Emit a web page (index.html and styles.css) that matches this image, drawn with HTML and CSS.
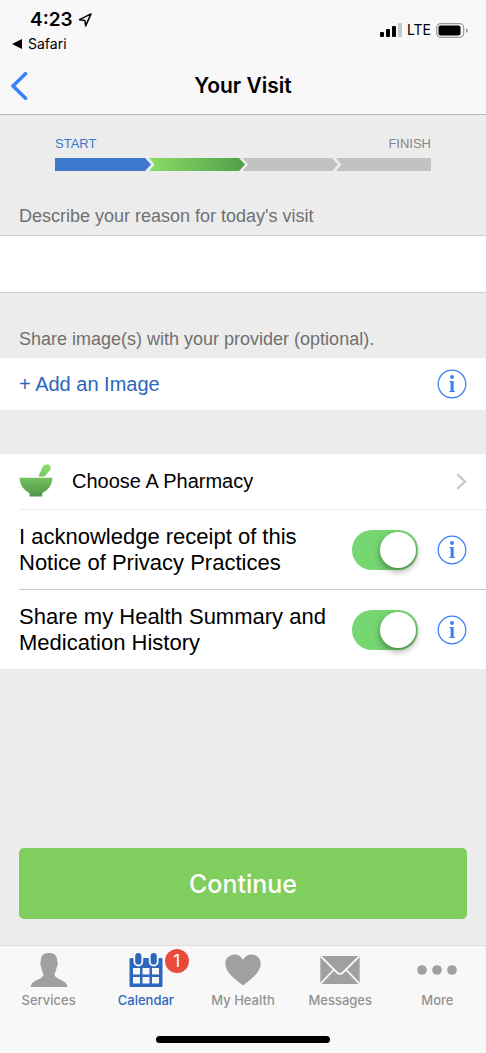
FILE: index.html
```html
<!DOCTYPE html>
<html lang="en">
<head>
<meta charset="utf-8">
<meta name="viewport" content="width=device-width, initial-scale=1">
<title>Your Visit</title>
<link rel="stylesheet" href="styles.css">
</head>
<body>
<div class="app">
  <header class="top">
    <div class="status">
      <div class="status-left">
        <div class="clock">4:23
          <svg width="14" height="14" viewBox="0 0 14 14" aria-hidden="true"><path d="M13 .9 1.500 6.700 6.900 7.400 7.700 12.900z" fill="none" stroke="#000" stroke-width="1.500" stroke-linejoin="round"/></svg>
        </div>
        <a class="return" href="#"><svg width="10" height="10" viewBox="0 0 10 10" aria-hidden="true"><path d="M0 5 10 0V10z"/></svg>Safari</a>
      </div>
      <div class="status-right">
        <svg width="22" height="14" viewBox="0 0 22 14" aria-hidden="true"><rect x="0" y="9" width="4" height="5" rx="1"/><rect x="6" y="6" width="4" height="8" rx="1"/><rect x="12" y="3" width="4" height="11" rx="1"/><rect x="18" y="0" width="4" height="14" rx="1" fill="#c6c6c6"/></svg>
        <span>LTE</span>
        <svg width="32" height="15" viewBox="0 0 32 15" aria-hidden="true"><rect x=".7" y=".7" width="27" height="13.6" rx="4" fill="none" stroke="#999" stroke-width="1.2"/><rect x="2.5" y="2.5" width="22" height="10" rx="2"/><path d="M30 5.2q1.700.6 1.700 2.300T30 9.800z" fill="#999"/></svg>
      </div>
    </div>
    <nav class="titlebar">
      <button class="back" type="button" aria-label="Back"><svg width="17" height="28" viewBox="0 0 17 28" aria-hidden="true"><path d="M14.5 1.8 2 14 14.5 26.2" fill="none" stroke="#3a82f7" stroke-width="3.6" stroke-linecap="round" stroke-linejoin="round"/></svg></button>
      <h1>Your Visit</h1>
    </nav>
  </header>

  <main>
    <section class="progress">
      <div class="progress-labels"><span class="start">START</span><span>FINISH</span></div>
      <svg class="progress-bar" viewBox="0 0 376 13" aria-hidden="true">
        <defs><linearGradient id="step"><stop offset="0" stop-color="#8cdc68"/><stop offset="1" stop-color="#4f9e48"/></linearGradient></defs>
        <path d="M0 0H90L96 6.500 90 13H0z" fill="#3c78cc"/>
        <path d="M94 0H184L190 6.500 184 13H94L99.500 6.500z" fill="url(#step)"/>
        <path d="M187.500 0H277L283 6.500 277 13H187.500L193 6.500z" fill="#c2c2c2"/>
        <path d="M281 0H376V13H281L286.500 6.500z" fill="#c2c2c2"/>
      </svg>
    </section>

    <label class="caption" for="reason">Describe your reason for today's visit</label>
    <input class="reason" id="reason" type="text">

    <p class="caption share">Share image(s) with your provider (optional).</p>
    <div class="row add">
      <button class="link" type="button">+ Add an Image</button>
      <button class="info" type="button" aria-label="About images"><svg viewBox="0 0 30 30" aria-hidden="true"><use href="#info"/></svg></button>
    </div>

    <div class="list">
      <button class="row pharmacy" type="button">
        <svg width="34" height="36" viewBox="0 0 34 36" aria-hidden="true">
          <defs><linearGradient id="mortar" x1="0" y1="0" x2="0" y2="33" gradientUnits="userSpaceOnUse"><stop offset="0" stop-color="#93e072"/><stop offset="1" stop-color="#4d9746"/></linearGradient></defs>
          <path d="M19.500 12.500 23.500 3Q25 .3 28 .3C31.500.3 32.500 4 30.800 6.300L25.500 12.500zM.5 13.800H33.500Q33 24.500 23.200 29.200V32.500H10.500V29.200Q1 24.500.5 13.800z" fill="url(#mortar)"/>
        </svg>
        <span>Choose A Pharmacy</span>
        <svg class="chevron" width="11" height="17" viewBox="0 0 11 17" aria-hidden="true"><path d="M1.200 1.200 9 8.500 1.200 15.800" fill="none" stroke="#c7c7cc" stroke-width="2.300"/></svg>
      </button>
      <div class="row consent">
        <label for="privacy">I acknowledge receipt of this Notice of Privacy Practices</label>
        <input class="switch" id="privacy" type="checkbox" role="switch" checked>
        <button class="info" type="button" aria-label="About privacy practices"><svg viewBox="0 0 30 30" aria-hidden="true"><use href="#info"/></svg></button>
      </div>
      <div class="row consent">
        <label for="summary">Share my Health Summary and Medication History</label>
        <input class="switch" id="summary" type="checkbox" role="switch" checked>
        <button class="info" type="button" aria-label="About sharing history"><svg viewBox="0 0 30 30" aria-hidden="true"><use href="#info"/></svg></button>
      </div>
    </div>

    <div class="action"><button class="continue" type="button">Continue</button></div>
  </main>

  <nav class="tabs">
    <div class="tab-list">
      <a class="tab" href="#"><svg width="38" height="36" viewBox="0 0 38 36" aria-hidden="true"><path d="M19 1C24 .5 27.500 4 27.300 9.500Q28.500 11 27 14.500 25.500 20 24.500 22C24.500 28 36.500 27 37.500 35H.5C2 27 13.500 28 13.500 22Q12 20 11 14.500 9.700 11 10.800 9.500C10.500 4 13.500.5 19 1z" fill="#a0a0a0"/></svg>Services</a>
      <a class="tab active" href="#" aria-current="page">
        <span class="icon-wrap"><svg width="34" height="36" viewBox="0 0 34 36" aria-hidden="true">
          <rect x=".5" y="6" width="33" height="29" rx="1.500" fill="#2d66bd"/>
          <g fill="#2d66bd" stroke="#f8f8f8" stroke-width="1.800"><rect x="5.300" y="0" width="8" height="13.500" rx="4"/><rect x="20.700" y="0" width="8" height="13.500" rx="4"/></g>
          <path d="M4 16H11V22.500H4zM13.500 16H20.500V22.500H13.500zM23 16H30V22.500H23zM4 25H11V31.500H4zM13.500 25H20.500V31.500H13.500zM23 25H30V31.500H23z" fill="#f8f8f8"/>
        </svg><span class="badge">1</span></span>Calendar</a>
      <a class="tab" href="#"><svg width="36" height="36" viewBox="0 0 36 36" aria-hidden="true"><path d="M18 33.500C11 27.500.3 21 .3 11.500.3 2 13.500-1.500 18 8 22.500-1.500 35.700 2 35.700 11.500 35.700 21 25 27.500 18 33.500z" fill="#a0a0a0"/></svg>My Health</a>
      <a class="tab" href="#"><svg width="40" height="36" viewBox="0 0 40 36" aria-hidden="true"><rect x=".3" y="4" width="39.400" height="28" fill="#a0a0a0"/><path d="M.3 4 17 20.500Q20 23.500 23 20.500L39.700 4M.3 32 13.500 18M39.700 32 26.500 18" fill="none" stroke="#f8f8f8" stroke-width="1.800"/></svg>Messages</a>
      <a class="tab" href="#"><svg width="40" height="36" viewBox="0 0 40 36" aria-hidden="true"><g fill="#a0a0a0"><circle cx="5" cy="18" r="4.800"/><circle cx="20" cy="18" r="4.800"/><circle cx="35" cy="18" r="4.800"/></g></svg>More</a>
    </div>
    <div class="home"></div>
  </nav>
</div>
<svg class="symbols" aria-hidden="true"><symbol id="info" viewBox="0 0 30 30"><circle cx="15" cy="15" r="13.800" fill="none" stroke="#3a82f7" stroke-width="1.300"/><circle cx="15" cy="8" r="2" fill="#3a82f7"/><path d="M12.300 12H16.700V21.800L18 22.300V23H12.300V22.300L13.600 21.800V13.200L12.300 12.800z" fill="#3a82f7"/></symbol></svg>
</body>
</html>
```
FILE: styles.css
```css
* { box-sizing: border-box; }
body {
  margin: 0;
  background: #ececec;
  color: #000;
  font-family: "Liberation Sans", Arial, sans-serif;
  font-size: 20px;
}
button { border: 0; padding: 0; background: none; color: inherit; font: inherit; text-align: left; }
a { color: inherit; text-decoration: none; }
h1, p { margin: 0; }
svg { display: block; flex: none; }
.symbols { position: absolute; width: 0; height: 0; }
.app { min-height: 100vh; display: flex; flex-direction: column; }

.top { background: #f8f8f8; border-bottom: 1px solid #b8b8b8; font-family: Inter, sans-serif; }
.status { display: flex; justify-content: space-between; align-items: flex-start; height: 57px; padding: 8px 18px 0 12px; }
.clock { display: flex; align-items: center; gap: 5px; padding-left: 18px; font-size: 19px; font-weight: 600; line-height: 24px; }
.return { display: flex; align-items: center; gap: 6px; font-size: 14px; line-height: 24px; }
.status-right { display: flex; align-items: center; gap: 5px; padding-top: 12px; font-size: 14px; line-height: 20px; }
.titlebar { display: grid; grid-template-columns: 32px 1fr 32px; align-items: center; height: 57px; padding: 0 11px; }
.titlebar h1 { font-size: 21px; font-weight: 600; line-height: 28px; text-align: center; }

main { flex: 1; display: flex; flex-direction: column; }
.progress { padding: 20px 55px 0; }
.progress-labels { display: flex; justify-content: space-between; margin-bottom: 5px; color: #858585; font-size: 13px; line-height: 18px; }
.progress-labels .start { color: #3c78cc; }
.progress-bar { width: 100%; }
.caption { padding: 34px 19px 8px; color: #707070; font-size: 18px; line-height: 22px; }
.reason { width: 100%; height: 58px; padding: 0 19px; border: solid #d0d0d0; border-width: 1px 0; border-radius: 0; background: #fff; font: inherit; }
.caption.share { padding-top: 35px; }
.row { display: flex; align-items: center; width: 100%; }
.add { justify-content: space-between; height: 52px; padding: 0 19px; background: #fff; }
.link { color: #2d66bd; }
.info { width: 30px; height: 30px; flex: none; }
.info svg { width: 30px; height: 30px; }

.list { margin-top: 44px; padding-left: 19px; background: #fff; }
.list .row { padding-right: 19px; }
.pharmacy { height: 56px; gap: 19px; border-bottom: 1px solid #ededed; }
.chevron { margin-left: auto; }
.consent { min-height: 79px; font-size: 22px; line-height: 26px; }
.consent + .consent { min-height: 80px; border-top: 1px solid #c8c8c8; }
.consent label { flex: 1; }
.switch { appearance: none; position: relative; flex: none; width: 66px; height: 40px; margin: 0 19px 0 8px; border-radius: 20px; background: #76d672; }
.switch::before { content: ""; position: absolute; top: 2px; right: 2px; width: 36px; height: 36px; border-radius: 50%; background: #fff; box-shadow: 0 3px 7px rgba(0, 0, 0, .4); }

.action { margin-top: auto; padding: 20px 19px 26px; }
.continue { width: 100%; height: 71px; border-radius: 5px; background: #80ce5d; color: #fff; font-family: Inter, sans-serif; font-size: 25px; font-weight: 500; text-align: center; }

.tabs { background: #f8f8f8; border-top: 1px solid #dcdcdc; font-family: Inter, sans-serif; }
.tab-list { display: flex; padding-top: 6px; }
.tab { flex: 1; display: flex; flex-direction: column; align-items: center; gap: 3px; color: #929292; font-size: 13px; font-weight: 500; line-height: 18px; }
.active { color: #2d66bd; }
.icon-wrap { position: relative; }
.badge { position: absolute; left: 36px; top: -3px; width: 24px; height: 24px; border-radius: 50%; background: #e94b3b; color: #fff; font-size: 17px; font-weight: 400; line-height: 24px; text-align: center; }
.home { width: 174px; height: 7px; margin: 27px auto 10px; border-radius: 4px; background: #000; }
```
